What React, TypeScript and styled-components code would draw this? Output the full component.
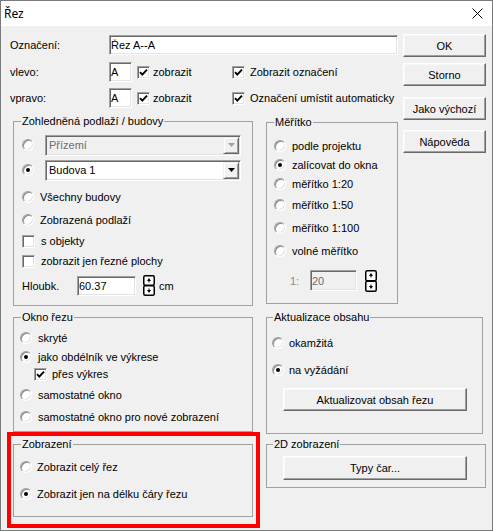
import React from "react";
import styled, { createGlobalStyle, css } from "styled-components";

const Global = createGlobalStyle`
  html, body { margin: 0; padding: 0; background: #fff; }
  body { font-family: "Liberation Sans", Arial, sans-serif; font-size: 11px; color: #000; }
  * { box-sizing: border-box; }
`;

const sunken = css`
  border: 1px solid;
  border-color: #a0a0a0 #fff #fff #a0a0a0;
  box-shadow: inset 1px 1px 0 #696969, inset -1px -1px 0 #e3e3e3;
`;

const raised = css`
  border: 1px solid;
  border-color: #fff #696969 #696969 #fff;
  box-shadow: inset -1px -1px 0 #a0a0a0, inset 1px 1px 0 #f8f8f8;
`;

const Window = styled.div`
  width: 493px;
  height: 531px;
  border: 1px solid #7a7a7a;
  background: #f0f0f0;
  display: flex;
  flex-direction: column;
  overflow: hidden;
`;

const TitleBar = styled.div`
  height: 25px;
  flex-shrink: 0;
  background: #fff;
  display: flex;
  align-items: center;
  justify-content: space-between;
  padding: 0 9px 0 3px;
`;

const Title = styled.span`
  font-family: "Noto Sans", "Liberation Sans", sans-serif;
  font-size: 12px;
`;

const Body = styled.div`
  flex: 1;
  padding-left: 6px;
  display: flex;
  flex-direction: column;
`;

const TopSection = styled.div`
  display: flex;
  gap: 5px;
`;

const LeftPane = styled.div`
  width: 391px;
  display: flex;
  flex-direction: column;
`;

const TopForm = styled.div`
  padding: 9px 0 0 3px;
  display: flex;
  flex-direction: column;
`;

const FieldRow = styled.div<{ $mt?: number }>`
  display: flex;
  align-items: center;
  height: 20px;
  margin-top: ${(p) => p.$mt ?? 0}px;
`;

const FieldLabel = styled.span<{ $w: number }>`
  width: ${(p) => p.$w}px;
  flex-shrink: 0;
`;

const TextInput = styled.input<{ $w: number; $h?: number }>`
  ${sunken};
  width: ${(p) => p.$w}px;
  height: ${(p) => p.$h ?? 20}px;
  padding: 0 0 0 1px;
  font: inherit;
  color: #000;
  background: #fff;
  outline: none;
  flex-shrink: 0;
  &:disabled {
    background: #f0f0f0;
    color: #6d6d6d;
  }
`;

const ButtonColumn = styled.div`
  width: 83px;
  padding-top: 8px;
  display: flex;
  flex-direction: column;
`;

const Btn = styled.button<{ $w: number; $h?: number; $mt?: number; $ml?: number }>`
  ${raised};
  width: ${(p) => p.$w}px;
  height: ${(p) => p.$h ?? 23}px;
  margin: ${(p) => p.$mt ?? 0}px 0 0 ${(p) => p.$ml ?? 0}px;
  padding: 0;
  background: #f0f0f0;
  font: inherit;
  color: #000;
  display: flex;
  align-items: center;
  justify-content: center;
  flex-shrink: 0;
`;

const GroupRow = styled.div`
  display: flex;
  align-items: flex-start;
  gap: 13px;
  padding-left: 6px;
  margin-top: 7px;
`;

const Group = styled.fieldset<{ $w: number; $mt?: number; $ml?: number }>`
  margin: ${(p) => p.$mt ?? 0}px 0 0 ${(p) => p.$ml ?? 0}px;
  padding: 0;
  min-width: 0;
  width: ${(p) => p.$w}px;
  border: 1px solid #a0a0a0;
`;

const Legend = styled.legend<{ $lx?: number }>`
  margin-left: ${(p) => p.$lx ?? 7}px;
  padding: 0 1px;
  font-size: 11px;
  line-height: 13px;
  height: 13px;
`;

const GroupBody = styled.div<{ $pl: number; $pb: number }>`
  display: flex;
  flex-direction: column;
  padding: 0 0 ${(p) => p.$pb}px ${(p) => p.$pl}px;
`;

const Row = styled.div<{ $mt?: number; $h?: number; $gap?: number; $ml?: number }>`
  display: flex;
  align-items: center;
  height: ${(p) => p.$h ?? 16}px;
  margin-top: ${(p) => p.$mt ?? 0}px;
  margin-left: ${(p) => p.$ml ?? 0}px;
  gap: ${(p) => p.$gap ?? 6}px;
  white-space: nowrap;
`;

const CheckCell = styled.div<{ $w?: number; $gap: number; $ml?: number }>`
  display: flex;
  align-items: center;
  gap: ${(p) => p.$gap}px;
  margin-left: ${(p) => p.$ml ?? 0}px;
  width: ${(p) => (p.$w ? `${p.$w}px` : "auto")};
  white-space: nowrap;
  flex-shrink: 0;
`;

const RadioDot = styled.span<{ $on?: boolean }>`
  width: 12px;
  height: 12px;
  border-radius: 50%;
  flex-shrink: 0;
  background: #fff;
  border: 1px solid;
  border-color: #a0a0a0 #fff #fff #a0a0a0;
  box-shadow: inset 1px 1px 0 #8a8a8a, inset -1px -1px 0 #e3e3e3;
  display: flex;
  align-items: center;
  justify-content: center;
  &::after {
    content: "";
    width: 4px;
    height: 4px;
    border-radius: 50%;
    background: #000;
    display: ${(p) => (p.$on ? "block" : "none")};
  }
`;

const CheckBox = styled.span`
  ${sunken};
  width: 13px;
  height: 13px;
  flex-shrink: 0;
  background: #fff;
  display: flex;
  align-items: center;
  justify-content: center;
`;

const Muted = styled.span`
  color: #8d8d8d;
`;

const SelectBox = styled.div<{ $disabled?: boolean }>`
  ${sunken};
  width: 196px;
  height: 21px;
  display: flex;
  align-items: center;
  justify-content: space-between;
  padding: 0 1px 0 3px;
  background: ${(p) => (p.$disabled ? "#f0f0f0" : "#fff")};
  color: ${(p) => (p.$disabled ? "#6d6d6d" : "#000")};
`;

const DropBtn = styled.span`
  width: 16px;
  height: 17px;
  display: flex;
  align-items: center;
  justify-content: center;
  background: #f0f0f0;
  border: 1px solid;
  border-color: #f0f0f0 #696969 #696969 #f0f0f0;
  box-shadow: inset 1px 1px 0 #fff, inset -1px -1px 0 #a0a0a0;
`;

const SpinWrap = styled.span<{ $ml: number }>`
  display: flex;
  margin-left: ${(p) => p.$ml}px;
  flex-shrink: 0;
`;

const BottomSection = styled.div`
  display: grid;
  grid-template-columns: 253px auto;
  column-gap: 6px;
  margin-top: 5px;
  align-items: start;
`;

const Column = styled.div<{ $gap?: number }>`
  display: flex;
  flex-direction: column;
  gap: ${(p) => p.$gap ?? 0}px;
`;

const Highlight = styled.div`
  width: 253px;
  border: 4px solid #ff0000;
  padding: 2px 0 7px 2px;
`;

const Radio = ({ on, label, gap = 6, mt, h }: { on?: boolean; label: string; gap?: number; mt?: number; h?: number }) => (
  <Row $mt={mt} $gap={gap} $h={h}>
    <RadioDot $on={on} />
    <span>{label}</span>
  </Row>
);

const CheckMark = () => (
  <svg width="9" height="9" viewBox="0 0 9 9">
    <path d="M1 4.2 L3.3 6.6 L8 1.6" fill="none" stroke="#000" strokeWidth="1.9" />
  </svg>
);

const Check = ({ on, label, gap, w, ml }: { on?: boolean; label: string; gap: number; w?: number; ml?: number }) => (
  <CheckCell $gap={gap} $w={w} $ml={ml}>
    <CheckBox>{on && <CheckMark />}</CheckBox>
    <span>{label}</span>
  </CheckCell>
);

const Arrow = ({ color }: { color: string }) => (
  <svg width="7" height="4" viewBox="0 0 7 4">
    <polygon points="0,0 7,0 3.5,4" fill={color} />
  </svg>
);

const Select = ({ value, disabled }: { value: string; disabled?: boolean }) => (
  <SelectBox $disabled={disabled}>
    <span>{value}</span>
    <DropBtn>
      <Arrow color={disabled ? "#a0a0a0" : "#000"} />
    </DropBtn>
  </SelectBox>
);

const Spinner = ({ ml, h = 21 }: { ml: number; h?: number }) => {
  const half = (h - 1) / 2;
  return (
    <SpinWrap $ml={ml}>
      <svg width="12" height={h} viewBox={`0 0 12 ${h}`}>
        <rect x="0.75" y="0.75" width="10.5" height={half - 0.5} rx="1.5" fill="#fff" stroke="#000" strokeWidth="1.5" />
        <rect x="0.75" y={half + 0.75} width="10.5" height={half - 0.5} rx="1.5" fill="#fff" stroke="#000" strokeWidth="1.5" />
        <path d={`M6 3 L8 6 L4 6 Z M5.5 6 H6.5 V7.5 H5.5 Z`} fill="#000" />
        <path d={`M6 ${h - 3} L8 ${h - 6} L4 ${h - 6} Z M5.5 ${h - 6} H6.5 V${h - 7.5} H5.5 Z`} fill="#000" />
      </svg>
    </SpinWrap>
  );
};

const CloseIcon = () => (
  <svg width="11" height="11" viewBox="0 0 11 11">
    <path d="M0.5 0.5 L10.5 10.5 M10.5 0.5 L0.5 10.5" stroke="#000" strokeWidth="1" />
  </svg>
);

export default function App() {
  return (
    <>
      <Global />
      <Window>
        <TitleBar>
          <Title>Řez</Title>
          <CloseIcon />
        </TitleBar>
        <Body>
          <TopSection>
            <LeftPane>
              <TopForm>
                <FieldRow>
                  <FieldLabel $w={99}>Označení:</FieldLabel>
                  <TextInput $w={289} defaultValue="Řez A--A" />
                </FieldRow>
                <FieldRow $mt={7}>
                  <FieldLabel $w={99}>vlevo:</FieldLabel>
                  <TextInput $w={23} defaultValue="A" />
                  <Check on label="zobrazit" gap={3} w={95} ml={5} />
                  <Check on label="Zobrazit označení" gap={5} />
                </FieldRow>
                <FieldRow $mt={6}>
                  <FieldLabel $w={99}>vpravo:</FieldLabel>
                  <TextInput $w={23} defaultValue="A" />
                  <Check on label="zobrazit" gap={3} w={95} ml={5} />
                  <Check on label="Označení umístit automaticky" gap={5} />
                </FieldRow>
              </TopForm>
              <GroupRow>
                <Group $w={240}>
                  <Legend>Zohledněná podlaží / budovy</Legend>
                  <GroupBody $pl={8} $pb={9}>
                    <Row $mt={7} $h={20} $gap={11}>
                      <RadioDot />
                      <Select value="Přízemí" disabled />
                    </Row>
                    <Row $mt={5} $h={20} $gap={11}>
                      <RadioDot $on />
                      <Select value="Budova 1" />
                    </Row>
                    <Radio label="Všechny budovy" mt={7} h={20} />
                    <Radio label="Zobrazená podlaží" mt={3} h={20} />
                    <Row $mt={1} $h={20}>
                      <Check label="s objekty" gap={6} />
                    </Row>
                    <Row $mt={0} $h={20}>
                      <Check label="zobrazit jen řezné plochy" gap={6} />
                    </Row>
                    <Row $mt={4} $h={21} $gap={0}>
                      <FieldLabel $w={55}>Hloubk.</FieldLabel>
                      <TextInput $w={59} defaultValue="60.37" />
                      <Spinner ml={7} />
                      <SpinWrap $ml={4}>cm</SpinWrap>
                    </Row>
                  </GroupBody>
                </Group>
                <Group $w={132} $mt={1}>
                  <Legend>Měřítko</Legend>
                  <GroupBody $pl={7} $pb={12}>
                    <Radio label="podle projektu" mt={9} />
                    <Radio label="zalícovat do okna" on mt={3} />
                    <Radio label="měřítko 1:20" mt={3} />
                    <Radio label="měřítko 1:50" mt={5} />
                    <Radio label="měřítko 1:100" mt={7} />
                    <Radio label="volné měřítko" mt={7} />
                    <Row $mt={11} $h={21} $gap={0} $ml={16}>
                      <FieldLabel $w={20}>
                        <Muted>1:</Muted>
                      </FieldLabel>
                      <TextInput $w={47} $h={21} defaultValue="20" disabled />
                      <Spinner ml={8} h={22} />
                    </Row>
                  </GroupBody>
                </Group>
              </GroupRow>
            </LeftPane>
            <ButtonColumn>
              <Btn $w={83}>OK</Btn>
              <Btn $w={83} $mt={6}>Storno</Btn>
              <Btn $w={83} $mt={11}>Jako výchozí</Btn>
              <Btn $w={83} $mt={10}>Nápověda</Btn>
            </ButtonColumn>
          </TopSection>
          <BottomSection>
            <Column>
              <Group $w={240} $ml={6}>
                <Legend>Okno řezu</Legend>
                <GroupBody $pl={6} $pb={6}>
                  <Radio label="skryté" mt={6} />
                  <Radio label="jako obdélník ve výkrese" on mt={3} />
                  <Row $mt={1} $ml={14}>
                    <Check on label="přes výkres" gap={5} />
                  </Row>
                  <Radio label="samostatné okno" mt={5} />
                  <Radio label="samostatné okno pro nové zobrazení" mt={6} />
                </GroupBody>
              </Group>
              <Highlight>
                <Group $w={240}>
                  <Legend>Zobrazení</Legend>
                  <GroupBody $pl={6} $pb={14}>
                    <Radio label="Zobrazit celý řez" gap={5} mt={8} />
                    <Radio label="Zobrazit jen na délku čáry řezu" on gap={5} mt={11} />
                  </GroupBody>
                </Group>
              </Highlight>
            </Column>
            <Column $gap={4}>
              <Group $w={217}>
                <Legend $lx={6}>Aktualizace obsahu</Legend>
                <GroupBody $pl={5} $pb={22}>
                  <Radio label="okamžitá" gap={5} mt={11} />
                  <Radio label="na vyžádání" on gap={5} mt={11} />
                  <Btn $w={184} $mt={10} $ml={11}>
                    Aktualizovat obsah řezu
                  </Btn>
                </GroupBody>
              </Group>
              <Group $w={220}>
                <Legend $lx={6}>2D zobrazení</Legend>
                <GroupBody $pl={16} $pb={7}>
                  <Btn $w={184} $h={24} $mt={5}>
                    Typy čar...
                  </Btn>
                </GroupBody>
              </Group>
            </Column>
          </BottomSection>
        </Body>
      </Window>
    </>
  );
}
